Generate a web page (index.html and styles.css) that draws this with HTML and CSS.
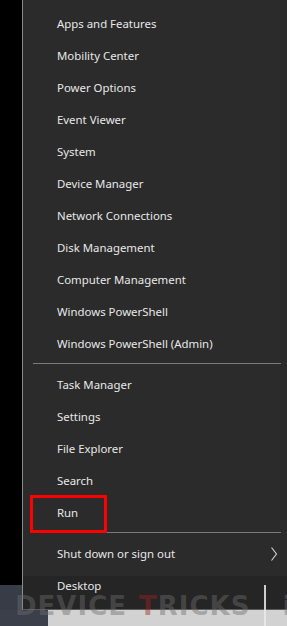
FILE: index.html
```html
<!DOCTYPE html>
<html>
<head>
<meta charset="utf-8">
<link rel="stylesheet" href="styles.css">
</head>
<body>
<div class="top">
  <div class="strip"><div class="strip-black"></div><div class="strip-blue"></div></div>
  <div class="menu">
    <div class="item">Apps and Features</div>
    <div class="item">Mobility Center</div>
    <div class="item">Power Options</div>
    <div class="item">Event Viewer</div>
    <div class="item">System</div>
    <div class="item">Device Manager</div>
    <div class="item">Network Connections</div>
    <div class="item">Disk Management</div>
    <div class="item">Computer Management</div>
    <div class="item">Windows PowerShell</div>
    <div class="item">Windows PowerShell (Admin)</div>
    <div class="sep"></div>
    <div class="item">Task Manager</div>
    <div class="item">Settings</div>
    <div class="item">File Explorer</div>
    <div class="item">Search</div>
    <div class="item run">Run<span class="highlight"></span></div>
    <div class="sep"></div>
    <div class="item sub">Shut down or sign out
      <svg class="chev" width="8" height="14" viewBox="0 0 8 14"><polyline points="1.5,0.5 6.5,7 1.5,13.5" fill="none" stroke="#d8d8d8" stroke-width="1.1"/></svg>
    </div>
    <div class="item">Desktop</div>
  </div>
</div>
<div class="taskbar">
  <div class="start"></div>
  <div class="searchbox"></div>
</div>
<div class="watermark"><span class="wm-d">DEVICE</span><span class="wm-t"><span class="red">T</span>RICKS</span><span class="wm-bar"></span><span class="wm-i">i</span></div>
</body>
</html>
```
FILE: styles.css
```css
html, body {
  margin: 0;
  padding: 0;
  background: #000;
  width: 287px;
  height: 626px;
  overflow: hidden;
  position: relative;
  font-family: "Noto Sans", "Open Sans", sans-serif;
}
.top {
  display: flex;
  height: 610px;
}
.strip {
  width: 22px;
  display: flex;
  flex-direction: column;
}
.strip-black { height: 585px; background: #000; }
.strip-blue { flex: 1; background: #373c46; }
.menu {
  flex: 1;
  border-left: 1px solid #8c8c8c;
  border-bottom: 1px solid #5a5a5a;
  background: linear-gradient(to bottom, #2b2b2b 0, #2b2b2b 576px, #252525 576px);
  padding-top: 7px;
  display: flex;
  flex-direction: column;
}
.item {
  box-sizing: border-box;
  height: 32px;
  padding-top: 2px;
  line-height: 30px;
  padding-left: 34px;
  color: #e8e8e8;
  font-size: 11.4px;
  position: relative;
}
.sep {
  height: 1px;
  background: #7a7a7a;
  margin: 4px 6px 4px 10px;
}
.highlight {
  position: absolute;
  left: 7px;
  top: -1px;
  width: 71px;
  height: 32px;
  border: 3px solid #ff0000;
}
.chev {
  position: absolute;
  right: 9px;
  top: 10px;
}
.taskbar {
  display: flex;
  height: 16px;
}
.start { width: 48px; background: #3a3f49; }
.searchbox { flex: 1; background: #d2d2d2; }
.watermark {
  position: absolute;
  left: 15px;
  top: 585px;
  display: flex;
  align-items: center;
  font-family: "DejaVu Sans", sans-serif;
  font-weight: bold;
  font-size: 26px;
  letter-spacing: 1px;
  line-height: 32px;
  color: rgba(110, 110, 110, 0.45);
}
.wm-t { margin-left: 12px; }
.red { color: rgba(160, 35, 35, 0.45); }
.wm-bar {
  width: 2px;
  height: 42px;
  background: rgba(235, 235, 235, 0.85);
  margin-left: 14px;
}
.wm-i { margin-left: 16px; }
```
